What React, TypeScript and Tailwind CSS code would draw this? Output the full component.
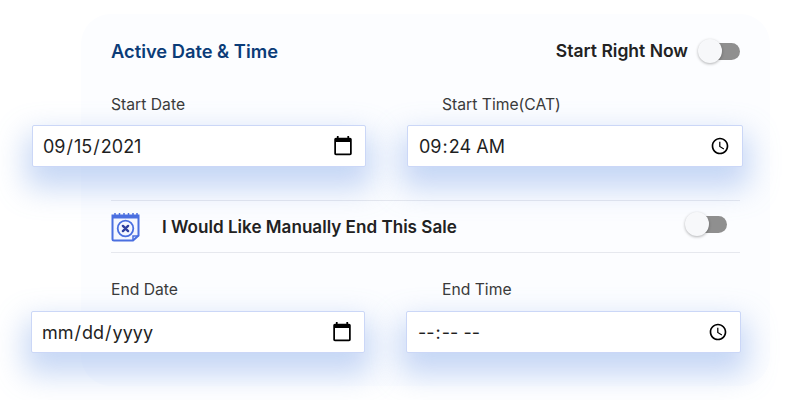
import React from "react";

const fieldClass =
  "h-[42px] w-full rounded-[2px] border-[1.5px] border-[#cbd7f7] bg-white text-[18px] text-[#1f1f1f] outline-none shadow-[0_15px_30px_6px_rgba(120,160,230,0.42)]";

const dateIcon = "pl-[9px] pr-[11px] [&::-webkit-calendar-picker-indicator]:h-[22px] [&::-webkit-calendar-picker-indicator]:w-[22px] [&::-webkit-calendar-picker-indicator]:p-0";
const timeIcon = "pl-[10px] pr-[12px] [&::-webkit-calendar-picker-indicator]:h-[20px] [&::-webkit-calendar-picker-indicator]:w-[20px] [&::-webkit-calendar-picker-indicator]:p-0";

const Toggle = () => (
  <div className="relative h-[17px] w-[30px] rounded-full bg-[#8f8f8f]">
    <div className="absolute left-[-12px] top-[-4px] h-[24px] w-[24px] rounded-full bg-[#f7f8fa] shadow-[0_1px_3px_rgba(0,0,0,0.3)]" />
  </div>
);

const NotepadIcon = () => (
  <svg width="29" height="30" viewBox="0 0 29 30" fill="none">
    <path d="M1.5 3.5H27.5V23.5L22 28.5H3A1.5 1.5 0 0 1 1.5 27Z" stroke="#4a6fe0" strokeWidth="2" fill="#f5f7ff" />
    <path d="M1.5 3.5H27.5V6.5H1.5Z" fill="#4a6fe0" />
    <path d="M4 1V4M8.5 1V4M13 1V4M17.5 1V4M22 1V4M26 1V4" stroke="#4a6fe0" strokeWidth="1.5" />
    <path d="M22 28.5V24H27.5" stroke="#4a6fe0" strokeWidth="1.5" />
    <circle cx="14.5" cy="16.5" r="7.8" stroke="#4a6fe0" strokeWidth="1.8" />
    <path d="M11.9 13.9L17.1 19.1M17.1 13.9L11.9 19.1" stroke="#2f3f9e" strokeWidth="2.4" strokeLinecap="round" />
  </svg>
);

const Field = ({
  label,
  type,
  value,
  labelClass,
  gapClass,
}: {
  label: string;
  type: string;
  value?: string;
  labelClass: string;
  gapClass: string;
}) => (
  <div className="flex flex-col">
    <label className={`h-[21px] text-[15.7px] leading-[21px] text-[#3a3a3a] ${labelClass}`}>{label}</label>
    <input
      type={type}
      defaultValue={value}
      className={`${gapClass} ${fieldClass} ${type === "date" ? dateIcon : timeIcon}`}
    />
  </div>
);

export default function App() {
  return (
    <div className="h-[400px] w-[785px] overflow-hidden bg-white pl-[81px] pr-[15px] pt-[14px] font-['Inter',sans-serif]">
      <div className="h-[372px] rounded-[30px] bg-[#fcfdff] px-[30px]">
        <div className="flex h-[80px] items-center justify-between pb-[5px]">
          <h2 className="text-[18.3px] font-semibold text-[#0b3c78]">Active Date &amp; Time</h2>
          <div className="flex items-center gap-[22px]">
            <span className="text-[17.5px] font-semibold text-[#222222]">Start Right Now</span>
            <Toggle />
          </div>
        </div>

        <div className="ml-[-79px] grid grid-cols-[334px_336px] gap-x-[41px]">
          <Field label="Start Date" type="date" value="2021-09-15" labelClass="pl-[79px]" gapClass="mt-[10px]" />
          <Field label="Start Time(CAT)" type="time" value="09:24" labelClass="pl-[35px]" gapClass="mt-[10px]" />
        </div>

        <div className="mt-[33px] flex h-[53px] items-center border-y border-[#e6e8ee] pr-[13px]">
          <NotepadIcon />
          <span className="ml-[22px] flex-1 text-[17.1px] font-semibold text-[#222222]">I Would Like Manually End This Sale</span>
          <div className="mt-[-4px]">
            <Toggle />
          </div>
        </div>

        <div className="ml-[-80px] mt-[26px] grid grid-cols-[334px_335px] gap-x-[41px]">
          <Field label="End Date" type="date" labelClass="pl-[80px]" gapClass="mt-[11px]" />
          <Field label="End Time" type="time" labelClass="pl-[36px]" gapClass="mt-[11px]" />
        </div>
      </div>
    </div>
  );
}
